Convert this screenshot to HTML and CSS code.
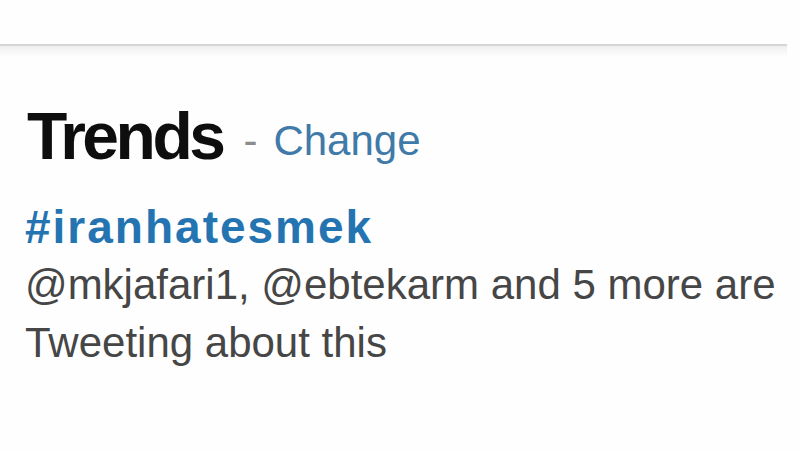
FILE: index.html
```html
<!DOCTYPE html>
<html lang="en">
<head>
<meta charset="utf-8">
<title>Trends</title>
<link rel="stylesheet" href="styles.css">
</head>
<body>
<div class="page">
  <div class="rule"></div>
  <section class="trends">
    <h2 class="trends-title"><span class="title-text">Trends</span><span class="sep">-</span><a class="change" href="#">Change</a></h2>
    <a class="hashtag" href="#">#iranhatesmek</a>
    <p class="summary">@mkjafari1, @ebtekarm and 5 more are Tweeting about this</p>
  </section>
</div>
</body>
</html>
```

FILE: styles.css
```css
html, body {
  margin: 0;
  padding: 0;
  background: #fefefe;
}

.page {
  width: 800px;
  height: 450px;
  overflow: hidden;
  font-family: "Liberation Sans", Arial, sans-serif;
}

.rule {
  margin-top: 44px;
  width: 787px;
  height: 12px;
  border-top: 2px solid #d6d6d6;
  background: linear-gradient(#eeeeee, #f6f6f6 40%, #ffffff);
}

.trends {
  padding-left: 25px;
}

.trends-title {
  margin: 42px 0 0 0;
  font-size: 66px;
  line-height: 72px;
  font-weight: bold;
  letter-spacing: -3.5px;
  color: #0e0e0e;
}

.title-text {
  padding-left: 2px;
}

.sep {
  display: inline-block;
  margin: 0 16px 0 21px;
  font-size: 42px;
  font-weight: normal;
  letter-spacing: 0;
  color: #8c8c8c;
  vertical-align: 4px;
}

.change {
  font-size: 42px;
  font-weight: normal;
  letter-spacing: 0;
  color: #3f7aa8;
  text-decoration: none;
  vertical-align: 4px;
}

.hashtag {
  display: block;
  margin-top: 24px;
  font-size: 46px;
  line-height: 52px;
  font-weight: bold;
  letter-spacing: 2px;
  color: #2574b2;
  text-decoration: none;
}

.summary {
  margin: 3px 0 0 0;
  max-width: 765px;
  font-size: 42px;
  line-height: 58px;
  color: #464646;
}
```
